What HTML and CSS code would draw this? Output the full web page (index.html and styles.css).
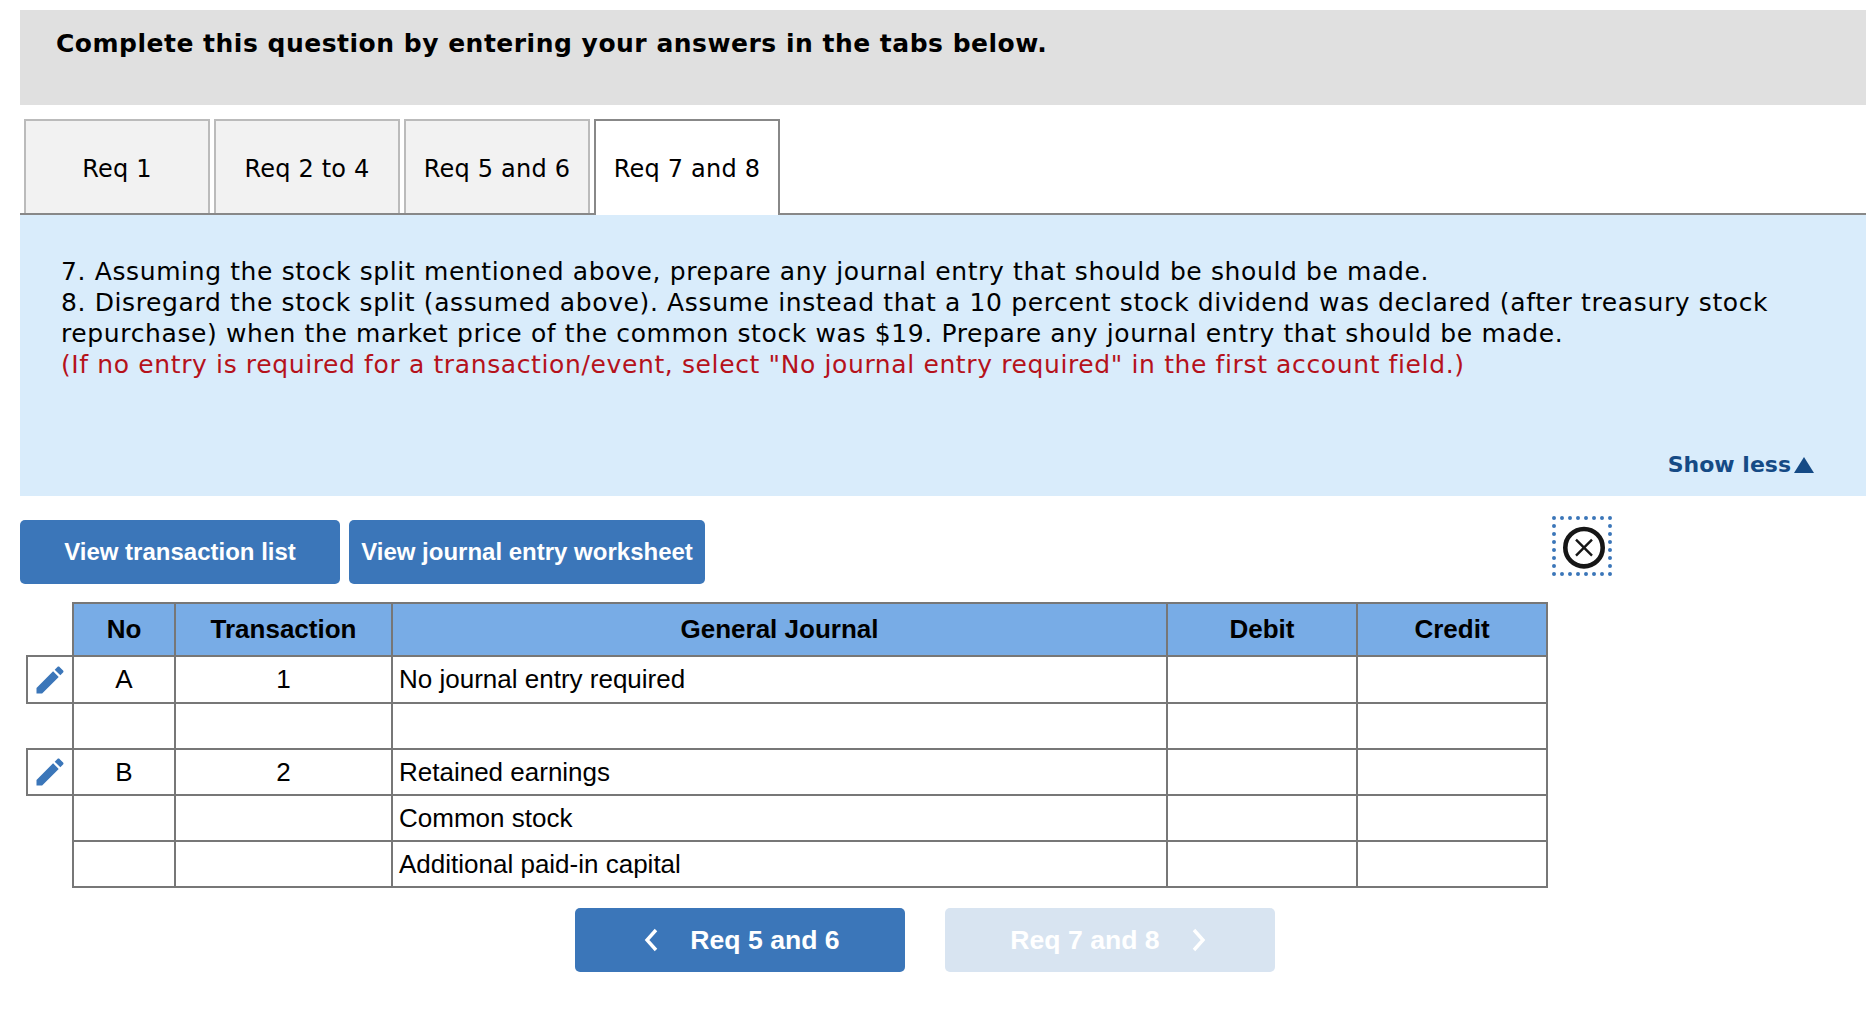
FILE: index.html
```html
<!DOCTYPE html>
<html lang="en">
<head>
    <meta charset="UTF-8">
    <meta name="viewport" content="width=device-width, initial-scale=1.0">
    <title>Journal Entry Question</title>
    <link rel="stylesheet" href="styles.css">
</head>
<body>
    <div class="instructions">Complete this question by entering your answers in the tabs below.</div>

    <div class="tabs">
        <div class="tab">Req 1</div>
        <div class="tab">Req 2 to 4</div>
        <div class="tab">Req 5 and 6</div>
        <div class="tab active">Req 7 and 8</div>
    </div>

    <div class="panel">
        <p class="panel-text">7. Assuming the stock split mentioned above, prepare any journal entry that should be should be made.<br>
        8. Disregard the stock split (assumed above). Assume instead that a 10 percent stock dividend was declared (after treasury stock repurchase) when the market price of the common stock was $19. Prepare any journal entry that should be made.<br>
        <span class="red">(If no entry is required for a transaction/event, select "No journal entry required" in the first account field.)</span></p>
        <div class="show-less">Show less<span class="triangle"></span></div>
    </div>

    <div class="toolbar">
        <button class="btn btn-list">View transaction list</button>
        <button class="btn btn-worksheet">View journal entry worksheet</button>
        <svg class="close-box" width="60" height="60" viewBox="0 0 60 60">
            <rect class="dots" x="2" y="2" width="56" height="56"/>
            <circle cx="32" cy="31.7" r="18.7" fill="none" stroke="#161616" stroke-width="4.6"/>
            <path d="M24 23.7 L40 39.7 M40 23.7 L24 39.7" fill="none" stroke="#161616" stroke-width="2.4"/>
        </svg>
    </div>

    <table class="journal">
        <colgroup>
            <col class="c-edit"><col class="c-no"><col class="c-trans"><col class="c-account"><col class="c-money"><col class="c-money">
        </colgroup>
        <thead>
            <tr>
                <th class="edit-blank"></th>
                <th>No</th>
                <th>Transaction</th>
                <th>General Journal</th>
                <th>Debit</th>
                <th>Credit</th>
            </tr>
        </thead>
        <tbody>
            <tr class="first-row">
                <td class="edit">
                    <svg class="pencil" width="36" height="36" viewBox="0 0 24 24"><path d="M3 17.25V21h3.75L17.81 9.94l-3.75-3.75L3 17.25zM20.71 7.04c.39-.39.39-1.02 0-1.41l-2.34-2.34c-.39-.39-1.02-.39-1.41 0l-1.83 1.83 3.75 3.75 1.83-1.83z"/></svg>
                </td>
                <td class="center">A</td><td class="center">1</td><td>No journal entry required</td><td></td><td></td>
            </tr>
            <tr>
                <td class="edit-blank"></td>
                <td></td><td></td><td></td><td></td><td></td>
            </tr>
            <tr>
                <td class="edit">
                    <svg class="pencil" width="36" height="36" viewBox="0 0 24 24"><path d="M3 17.25V21h3.75L17.81 9.94l-3.75-3.75L3 17.25zM20.71 7.04c.39-.39.39-1.02 0-1.41l-2.34-2.34c-.39-.39-1.02-.39-1.41 0l-1.83 1.83 3.75 3.75 1.83-1.83z"/></svg>
                </td>
                <td class="center">B</td><td class="center">2</td><td>Retained earnings</td><td></td><td></td>
            </tr>
            <tr>
                <td class="edit-blank"></td>
                <td></td><td></td><td>Common stock</td><td></td><td></td>
            </tr>
            <tr>
                <td class="edit-blank"></td>
                <td></td><td></td><td>Additional paid-in capital</td><td></td><td></td>
            </tr>
        </tbody>
    </table>

    <div class="pager">
        <button class="btn pager-btn prev">
            <svg class="chevron" width="14" height="24" viewBox="0 0 14 24"><path d="M12 2 L3 12 L12 22"/></svg>
            <span>Req 5 and 6</span>
        </button>
        <button class="btn pager-btn next disabled">
            <span>Req 7 and 8</span>
            <svg class="chevron" width="14" height="24" viewBox="0 0 14 24"><path d="M2 2 L11 12 L2 22"/></svg>
        </button>
    </div>
</body>
</html>
```

FILE: styles.css
```css
body {
    margin: 0;
    padding: 10px 7px 0 20px;
    background: white;
    font-family: "Liberation Sans", Arial, sans-serif;
    color: black;
    overflow: hidden;
}
.instructions {
    height: 95px;
    box-sizing: border-box;
    padding: 18px 0 0 36px;
    background: #e0e0e0;
    font-family: "DejaVu Sans", Verdana, sans-serif;
    font-size: 25px;
    font-weight: bold;
    line-height: 32px;
    letter-spacing: 0.5px;
}
.tabs {
    display: flex;
    gap: 4px;
    margin-top: 14px;
    padding-left: 4px;
    border-bottom: 2px solid #888;
    height: 94px;
}
.tab {
    width: 186px;
    height: 94px;
    box-sizing: border-box;
    padding-top: 3px;
    display: flex;
    align-items: center;
    justify-content: center;
    background: #f2f2f2;
    border: 2px solid #bbb;
    border-bottom: none;
    font-family: "DejaVu Sans", Verdana, sans-serif;
    font-size: 24px;
    letter-spacing: 0.2px;
}
.tab.active {
    height: 96px;
    padding-top: 1px;
    background: white;
    border-color: #888;
}
.panel {
    height: 281px;
    box-sizing: border-box;
    padding: 41px 30px 0 41px;
    background: #d9ecfb;
    font-family: "DejaVu Sans", Verdana, sans-serif;
    font-size: 25px;
    line-height: 31px;
    letter-spacing: 0.62px;
    display: flex;
    flex-direction: column;
}
.panel-text {
    margin: 0;
}
.red {
    color: #b5121b;
}
.show-less {
    margin-top: auto;
    margin-bottom: 16px;
    margin-right: 22px;
    align-self: flex-end;
    display: flex;
    align-items: center;
    gap: 3px;
    color: #154a85;
    font-size: 22px;
    font-weight: bold;
    line-height: 30px;
    letter-spacing: 0;
}
.triangle {
    width: 0;
    height: 0;
    border-left: 10px solid transparent;
    border-right: 10px solid transparent;
    border-bottom: 16px solid #154a85;
}
.toolbar {
    display: flex;
    align-items: flex-start;
    gap: 9px;
    padding-top: 20px;
}
.btn {
    border: none;
    border-radius: 5px;
    background: #3b76b9;
    color: white;
    font-family: "Liberation Sans", Arial, sans-serif;
    font-weight: bold;
    font-size: 24px;
    padding: 0;
}
.btn-list {
    width: 320px;
    height: 64px;
    margin-top: 4px;
}
.btn-worksheet {
    width: 356px;
    height: 64px;
    margin-top: 4px;
}
.close-box {
    margin-left: 838px;
}
.dots {
    fill: none;
    stroke: #3b76b9;
    stroke-width: 4;
    stroke-linecap: round;
    stroke-dasharray: 0 8;
}
.journal {
    border-collapse: collapse;
    table-layout: fixed;
    width: 1522px;
    margin: 18px 0 0 6px;
    font-size: 26px;
}
.c-edit { width: 46px; }
.c-no { width: 102px; }
.c-trans { width: 217px; }
.c-account { width: 775px; }
.c-money { width: 190px; }
.journal th {
    height: 50px;
    background: #78ace6;
    border: 2px solid #777;
    font-weight: bold;
    padding: 0 0 1px;
}
.journal td {
    height: 44px;
    border: 2px solid #777;
    padding: 0 0 0 6px;
}
.journal .first-row td {
    height: 45px;
}
.journal td.center {
    text-align: center;
    padding: 0;
}
.journal .edit-blank {
    background: none;
    border-top: none;
    border-left: none;
    border-bottom: none;
}
.journal td.edit {
    padding: 0;
    text-align: center;
}
.pencil {
    display: block;
    margin: 0 auto;
    fill: #3b76b9;
}
.pager {
    display: flex;
    gap: 40px;
    margin: 20px 0 0 555px;
}
.pager-btn {
    width: 330px;
    height: 64px;
    display: flex;
    align-items: center;
    justify-content: center;
    gap: 32px;
    font-size: 26.6px;
}
.pager-btn.prev {
    padding-left: 4px;
}
.pager-btn.next {
    padding-right: 4px;
}
.pager-btn.disabled {
    background: #d8e4f1;
}
.chevron path {
    fill: none;
    stroke: white;
    stroke-width: 3.4;
}
```
